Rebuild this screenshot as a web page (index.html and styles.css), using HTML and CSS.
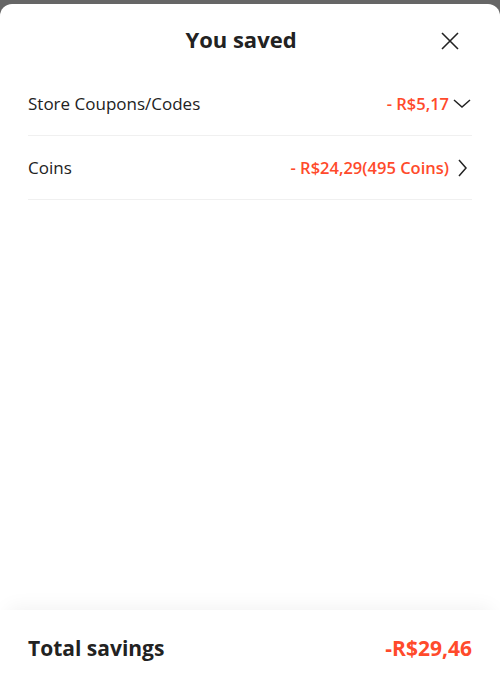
FILE: index.html
```html
<!DOCTYPE html>
<html>
<head>
<meta charset="utf-8">
<link rel="stylesheet" href="styles.css">
</head>
<body>
<div class="sheet">
  <div class="header">
    <h1 class="title">You saved</h1>
    <button class="close" aria-label="Close">
      <svg width="20" height="20" viewBox="0 0 20 20"><path d="M2 2 L18 18 M18 2 L2 18" stroke="#222" stroke-width="1.6" fill="none"/></svg>
    </button>
  </div>
  <div class="list">
    <div class="row">
      <span class="label">Store Coupons/Codes</span>
      <span class="right">
        <span class="amount">- R$5,17</span>
        <span class="icon"><svg width="20" height="20" viewBox="0 0 20 20"><path d="M2 6 L10 13 L18 6" stroke="#222" stroke-width="1.5" fill="none"/></svg></span>
      </span>
    </div>
    <div class="row">
      <span class="label">Coins</span>
      <span class="right">
        <span class="amount">- R$24,29(495 Coins)</span>
        <span class="icon"><svg width="20" height="20" viewBox="0 0 20 20"><path d="M7 2 L14 10 L7 18" stroke="#222" stroke-width="1.5" fill="none"/></svg></span>
      </span>
    </div>
  </div>
  <div class="footer">
    <span class="total-label">Total savings</span>
    <span class="total-amount">-R$29,46</span>
  </div>
</div>
</body>
</html>
```
FILE: styles.css
```css
html, body {
  margin: 0;
  padding: 0;
  height: 100%;
}
body {
  background: #666666;
  font-family: "Open Sans", "Noto Sans", sans-serif;
  color: #222;
  overflow: hidden;
}
.sheet {
  margin-top: 4px;
  height: 677px;
  background: #fff;
  border-radius: 12px 12px 0 0;
  display: flex;
  flex-direction: column;
}
.header {
  height: 68px;
  box-sizing: border-box;
  padding: 2px 18px 0 0;
  display: flex;
  align-items: center;
  justify-content: center;
  position: relative;
}
.title {
  margin: 0;
  font-size: 22px;
  font-weight: 700;
  color: #222;
}
.close {
  position: absolute;
  right: 40px;
  top: 27px;
  width: 20px;
  height: 20px;
  padding: 0;
  border: 0;
  background: none;
  display: flex;
}
.list {
  padding: 0 28px;
}
.row {
  height: 64px;
  display: flex;
  align-items: center;
  justify-content: space-between;
  border-bottom: 1px solid #f0f0f0;
  box-sizing: border-box;
  font-size: 17px;
}
.label {
  color: #222;
}
.right {
  display: flex;
  align-items: center;
  gap: 3px;
}
.amount {
  color: #ff4a2b;
  font-weight: 600;
  font-size: 16.5px;
}
.icon {
  display: flex;
  width: 20px;
  height: 20px;
}
.footer {
  margin-top: auto;
  height: 71px;
  box-sizing: border-box;
  padding: 4px 28px 0;
  display: flex;
  align-items: center;
  justify-content: space-between;
  background: #fff;
  box-shadow: 0 -10px 20px -8px rgba(0,0,0,0.06);
  font-size: 21px;
  font-weight: 700;
}
.total-label {
  color: #222;
}
.total-amount {
  color: #ff4a2b;
}
```
